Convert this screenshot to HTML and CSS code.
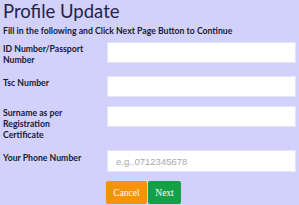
FILE: index.html
```html
<!DOCTYPE html>
<html lang="en">
<head>
    <meta charset="UTF-8">
    <title>Profile Update</title>
    <link rel="stylesheet" href="styles.css">
</head>
<body>
    <div class="page">
        <h1>Profile Update</h1>
        <p class="intro">Fill in the following and Click Next Page Button to Continue</p>
        <form class="form">
            <div class="row row-id">
                <label for="idNumber">ID Number/Passport Number</label>
                <input type="text" id="idNumber">
            </div>
            <div class="row row-tsc">
                <label for="tsc">Tsc Number</label>
                <input type="text" id="tsc">
            </div>
            <div class="row row-surname">
                <label for="surname">Surname as per Registration Certificate</label>
                <input type="text" id="surname">
            </div>
            <div class="row row-phone">
                <label for="phone">Your Phone Number</label>
                <input type="text" id="phone" placeholder="e.g..0712345678">
            </div>
            <div class="actions">
                <button type="button" class="cancel-btn">Cancel</button>
                <button type="button" class="next-btn">Next</button>
            </div>
        </form>
    </div>
</body>
</html>
```
FILE: styles.css
```css
body, html {
    margin: 0;
    padding: 0;
    background-color: #d1d1fc;
    font-family: Lato, "Open Sans", sans-serif;
    color: #1a1a2e;
}
.page {
    padding: 0 3px;
}
h1 {
    margin: 0;
    font-size: 18.5px;
    font-weight: normal;
    line-height: 22px;
    color: #23234a;
}
.intro {
    margin: 3px 0 0;
    font-size: 8.7px;
    font-weight: bold;
    line-height: 12px;
}
.form {
    margin-top: 5px;
}
.row {
    display: flex;
    align-items: flex-start;
}
.row label {
    width: 84px;
    padding-right: 20px;
    flex: none;
    font-size: 8.7px;
    font-weight: bold;
    line-height: 11px;
    padding-top: 1px;
}
.row input {
    width: 190px;
    height: 21px;
    box-sizing: border-box;
    border: 1px solid #e4e4f4;
    background: #fff;
    padding: 0 8px;
    font-family: "Liberation Sans", sans-serif;
    font-size: 9.5px;
}
.row input::placeholder {
    color: #a8a8a8;
}
.row-id {
    height: 34px;
}
.row-tsc {
    height: 30px;
}
.row-surname {
    height: 44px;
}
.row-phone {
    height: 31px;
}
.row-phone label {
    padding-top: 2px;
}
.row-phone input {
    height: 22px;
}
.actions {
    display: flex;
    gap: 1px;
    margin-left: 103px;
}
.actions button {
    height: 23px;
    padding: 0;
    border: none;
    border-radius: 2px;
    color: #fff;
    font-family: "Liberation Serif", serif;
    font-size: 9.5px;
    cursor: pointer;
}
.cancel-btn {
    width: 41px;
    background-color: #f7930a;
}
.next-btn {
    width: 33px;
    background-color: #14a047;
}
```
